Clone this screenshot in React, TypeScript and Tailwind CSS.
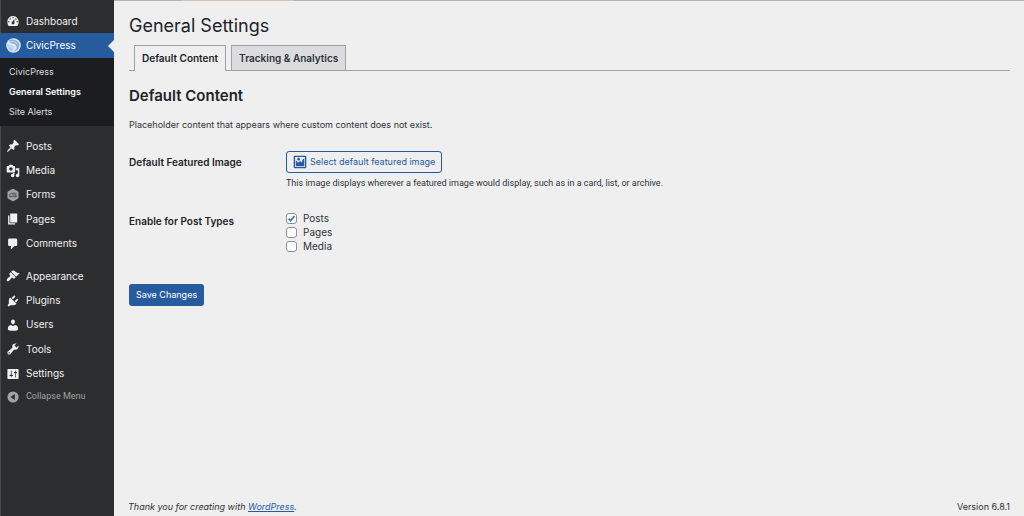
import type { ReactNode } from "react";

type IconProps = { d: string; className?: string };

function Glyph({ d, className = "size-[14px]" }: IconProps) {
  return (
    <svg viewBox="0 0 20 20" fill="currentColor" fillRule="evenodd" aria-hidden="true" className={className}>
      <path d={d} />
    </svg>
  );
}

const paths = {
  dashboard:
    "M3.76 17h12.48A7.95 7.95 0 0 0 18 11c0-4.42-3.58-8-8-8s-8 3.58-8 8c0 2.3.66 4.6 1.76 6zM10 4c.55 0 1 .45 1 1s-.45 1-1 1-1-.45-1-1 .45-1 1-1zM6 6c.55 0 1 .45 1 1s-.45 1-1 1-1-.45-1-1 .45-1 1-1zm8 0c.55 0 1 .45 1 1s-.45 1-1 1-1-.45-1-1 .45-1 1-1zm-5.37 5.55L12 7v6c0 1.1-.9 2-2 2s-2-.9-2-2c0-.57.24-1.08.63-1.45zM4 10c.55 0 1 .45 1 1s-.45 1-1 1-1-.45-1-1 .45-1 1-1zm12 0c.55 0 1 .45 1 1s-.45 1-1 1-1-.45-1-1 .45-1 1-1z",
  posts:
    "M10.44 3.02l1.82-1.82 6.36 6.35-1.83 1.82c-1.05-.68-2.48-.57-3.41.36l-.75.75c-.92.93-1.04 2.35-.35 3.41l-1.83 1.82-2.41-2.41-2.8 2.79c-.42.42-3.38 2.71-3.8 2.29s1.86-3.39 2.28-3.81l2.79-2.79L4.1 9.36l1.83-1.82c1.05.69 2.48.57 3.4-.36l.75-.75c.93-.92 1.05-2.35.36-3.41z",
  media:
    "M13 11V4c0-.55-.45-1-1-1h-1.67L9 1H5L3.67 3H2c-.55 0-1 .45-1 1v7c0 .55.45 1 1 1h10c.55 0 1-.45 1-1zM7 4.5c1.38 0 2.5 1.12 2.5 2.5S8.38 9.5 7 9.5 4.5 8.38 4.5 7 5.62 4.5 7 4.5zM14 6h5v10.5c0 1.38-1.12 2.5-2.5 2.5S14 17.88 14 16.5s1.12-2.5 2.5-2.5c.17 0 .34.02.5.05V9h-3V6zm-4 8.05V13h2v3.5c0 1.38-1.12 2.5-2.5 2.5S7 17.88 7 16.5 8.12 14 9.5 14c.17 0 .34.02.5.05z",
  pages: "M6 15V2h10v13H6zm-1 1h8v2H3V5h2v11z",
  comments: "M5 2h9c1.1 0 2 .9 2 2v7c0 1.1-.9 2-2 2h-2l-5 5v-5H5c-1.1 0-2-.9-2-2V4c0-1.1.9-2 2-2z",
  appearance:
    "M14.48 11.06L7.41 3.99l1.5-1.5c.5-.56 2.3-.47 3.51.32 1.21.8 1.43 1.28 2.91 2.1 1.18.64 2.45 1.26 4.45.85zm-.71.71L6.7 4.7 4.93 6.47c-.39.39-.39 1.02 0 1.41l1.06 1.06c.39.39.39 1.03 0 1.42-.6.6-1.43 1.11-2.21 1.69-.35.26-.7.53-1.01.84C1.43 14.23.4 16.08 1.4 17.07c.99 1 2.84-.03 4.18-1.36.31-.31.58-.66.85-1.02.57-.78 1.08-1.61 1.69-2.21.39-.39 1.02-.39 1.41 0l1.06 1.06c.39.39 1.02.39 1.41 0z",
  plugins:
    "M13.11 4.36L9.87 7.6 8 5.73l3.24-3.24c.35-.34 1.05-.2 1.56.32.52.51.66 1.21.31 1.55zm-8 1.77l.91-1.12 9.01 9.01-1.19.84c-.71.71-2.63 1.16-3.82 1.16H6.14L4.9 17.26c-.59.59-1.54.59-2.12 0-.59-.58-.59-1.53 0-2.12l1.24-1.24v-3.88c0-1.13.4-3.19 1.09-3.89zm7.26 3.97l3.24-3.24c.34-.35 1.04-.21 1.55.31.52.51.66 1.21.31 1.55l-3.24 3.25z",
  users:
    "M10 9.25c-2.27 0-2.73-3.44-2.73-3.44C7 4.02 7.82 2 9.97 2c2.16 0 2.98 2.02 2.71 3.81 0 0-.41 3.44-2.68 3.44zm0 2.57L12.72 10c2.39 0 4.52 2.33 4.52 4.53v2.49s-3.65 1.13-7.24 1.13c-3.65 0-7.24-1.13-7.24-1.13v-2.49c0-2.25 1.94-4.48 4.47-4.48z",
  tools:
    "M16.68 9.77c-1.34 1.34-3.3 1.67-4.95.99l-5.41 6.52c-.99.99-2.59.99-3.58 0s-.99-2.59 0-3.57l6.52-5.42c-.68-1.65-.35-3.61.99-4.95 1.28-1.28 3.12-1.62 4.72-1.06l-2.89 2.89 2.82 2.82 2.86-2.87c.53 1.58.18 3.39-1.08 4.65zM3.81 16.21c.4.39 1.04.39 1.43 0 .4-.4.4-1.04 0-1.43-.39-.4-1.03-.4-1.43 0-.39.39-.39 1.03 0 1.43z",
  settings:
    "M18 16V4c0-.55-.45-1-1-1H3c-.55 0-1 .45-1 1v12c0 .55.45 1 1 1h14c.55 0 1-.45 1-1zM8 11h1c.55 0 1 .45 1 1s-.45 1-1 1H8v1.5c0 .28-.22.5-.5.5s-.5-.22-.5-.5V13H6c-.55 0-1-.45-1-1s.45-1 1-1h1V5.5c0-.28.22-.5.5-.5s.5.22.5.5V11zm5-2h-1c-.55 0-1-.45-1-1s.45-1 1-1h1V5.5c0-.28.22-.5.5-.5s.5.22.5.5V7h1c.55 0 1 .45 1 1s-.45 1-1 1h-1v5.5c0 .28-.22.5-.5.5s-.5-.22-.5-.5V9z",
  collapse: "M10 2a8 8 0 1 0 0 16 8 8 0 0 0 0-16zM12.6 5.8v8.4L6.4 10z",
  image:
    "M2.25 1h15.5c.69 0 1.25.56 1.25 1.25v15.5c0 .69-.56 1.25-1.25 1.25H2.25C1.56 19 1 18.44 1 17.75V2.25C1 1.56 1.56 1 2.25 1zM17 17V3H3v14h14zM10 6c0-1.1-.9-2-2-2s-2 .9-2 2 .9 2 2 2 2-.9 2-2zm3 5s0-6 3-6v10c0 .55-.45 1-1 1H5c-.55 0-1-.45-1-1V8c2 0 3 4 3 4s1-3 3-3 3 2 3 2z",
};

function CivicPressLogo() {
  return (
    <svg viewBox="0 0 30 30" aria-hidden="true" className="size-[15px]">
      <circle cx="15" cy="15" r="14.5" fill="#dfeaf6" />
      <path d="M5 5C10 2 17 2 22 6c5 4 6 10 3 15-2 4-6 6-10 6 4-3 7-6 6-10-1-4-4-5-8-6-4 0-7-2-8-6z" fill="#8fb2da" />
      <path d="M3 12c3 2 6 2 9 3 4 1 5 5 3 8-1 2-3 3-5 4-5-3-8-8-7-15z" fill="#b4cce8" />
      <path d="M6 8c5-2 11-2 16 3M5 16c4 1 8 1 9 5" fill="none" stroke="#eef4fb" strokeWidth="1.2" />
    </svg>
  );
}

function FormsIcon() {
  return (
    <svg viewBox="0 0 20 20" aria-hidden="true" className="size-[14px] text-[#a0a3a6]">
      <path
        fill="currentColor"
        d="M8.8 1.3a2.4 2.4 0 0 1 2.4 0l5.500 3.200a2.400 2.400 0 0 1 1.200 2v7a2.400 2.400 0 0 1-1.200 2l-5.500 3.200a2.400 2.400 0 0 1-2.400 0l-5.500-3.200a2.400 2.400 0 0 1-1.200-2v-7a2.400 2.400 0 0 1 1.200-2z"
      />
      <path d="M15 7.500H8.200C6.200 7.500 5.300 9 5.200 12.500h9.300V10H8.500" fill="none" stroke="#46484b" strokeWidth="1.300" />
    </svg>
  );
}

function MenuItem({ icon, children }: { icon: ReactNode; children: ReactNode }) {
  return (
    <li className="flex">
      <a href="#" className="flex flex-1 items-center text-[10px] text-[#f0f0f1]">
        <span className="flex w-[26px] justify-center">{icon}</span>
        {children}
      </a>
    </li>
  );
}

function Sidebar() {
  return (
    <nav aria-label="Main menu" className="w-[114px] shrink-0 border-l border-[#48494b] bg-[#2c2d2f] pt-[9px]">
      <div className="-ml-px">
        <ul className="grid h-[24px] auto-rows-fr">
          <MenuItem icon={<Glyph d={paths.dashboard} />}>Dashboard</MenuItem>
        </ul>
        <a href="#" className="relative flex h-[25px] items-center bg-[#265c9e] text-[10px] text-white">
          <span className="flex w-[26px] justify-center">
            <CivicPressLogo />
          </span>
          CivicPress
          <span className="absolute top-1/2 right-0 -translate-y-1/2 border-y-6 border-r-6 border-y-transparent border-r-[#efefef]" />
        </a>
        <ul className="flex flex-col bg-[#1c1d20] px-[9px] py-[4px] text-[9px] leading-[20px] text-[#dcdcde]">
          <li><a href="#">CivicPress</a></li>
          <li><a href="#" className="font-semibold text-white">General Settings</a></li>
          <li><a href="#">Site Alerts</a></li>
        </ul>
        <ul className="mt-[8px] grid h-[122px] auto-rows-fr">
          <MenuItem icon={<Glyph d={paths.posts} />}>Posts</MenuItem>
          <MenuItem icon={<Glyph d={paths.media} />}>Media</MenuItem>
          <MenuItem icon={<FormsIcon />}>Forms</MenuItem>
          <MenuItem icon={<Glyph d={paths.pages} />}>Pages</MenuItem>
          <MenuItem icon={<Glyph d={paths.comments} />}>Comments</MenuItem>
        </ul>
        <ul className="mt-[8px] grid h-[122px] auto-rows-fr">
          <MenuItem icon={<Glyph d={paths.appearance} />}>Appearance</MenuItem>
          <MenuItem icon={<Glyph d={paths.plugins} />}>Plugins</MenuItem>
          <MenuItem icon={<Glyph d={paths.users} />}>Users</MenuItem>
          <MenuItem icon={<Glyph d={paths.tools} />}>Tools</MenuItem>
          <MenuItem icon={<Glyph d={paths.settings} />}>Settings</MenuItem>
        </ul>
        <button type="button" className="flex h-[22px] w-full items-center font-['Roboto','Inter',sans-serif] text-[9px] text-[#a0a3a6]">
          <span className="flex w-[26px] justify-center">
            <Glyph d={paths.collapse} />
          </span>
          Collapse Menu
        </button>
      </div>
    </nav>
  );
}

function PostTypeOption({ label, checked = false }: { label: string; checked?: boolean }) {
  return (
    <label className="flex items-center gap-[6px] text-[10px] leading-[14px]">
      <span className="relative flex">
        <input
          type="checkbox"
          defaultChecked={checked}
          className="peer size-[11px] appearance-none rounded-[3px] border border-[#8c8f94] bg-white"
        />
        <svg
          viewBox="0 0 11 11"
          aria-hidden="true"
          className="pointer-events-none invisible absolute inset-0 size-[11px] peer-checked:visible"
        >
          <path d="M2.600 5.600 4.700 7.800 8.500 2.900" fill="none" stroke="#3a76c0" strokeWidth="1.700" />
        </svg>
      </span>
      {label}
    </label>
  );
}

export default function App() {
  return (
    <div className="flex min-h-screen flex-col bg-[#efefef] font-['Inter','Liberation_Sans',sans-serif] text-[#2c3338]">
      <div className="flex min-h-screen">
        <Sidebar />
        <div className="flex flex-1 flex-col">
          <div className="flex h-px bg-[#b4b4b5]">
            <div className="ml-[67px] w-[113px] bg-[#d3c2b0]" />
          </div>
          <main className="flex-1 pr-[14px] pl-[15px]">
            <h1 className="pt-[13px] text-[18px] leading-[24px] text-[#1d2327]">General Settings</h1>
            <div className="mt-[7px] flex gap-[5px] border-b border-[#a0a1a4] pl-[5px]">
              <a
                href="#"
                className="-mb-px border border-b-0 border-[#a0a1a4] bg-[#efefef] px-[7px] text-[10px] leading-[25px] font-semibold text-[#1d2327]"
              >
                Default Content
              </a>
              <a
                href="#"
                className="border border-b-0 border-[#a0a1a4] bg-[#dcdcde] px-[7px] text-[10px] leading-[24px] font-semibold text-[#2c3338]"
              >
                Tracking &amp; Analytics
              </a>
            </div>
            <h2 className="mt-[16px] text-[15px] leading-[18px] font-semibold text-[#1d2327]">Default Content</h2>
            <p className="mt-[13px] text-[9px] leading-[14px]">
              Placeholder content that appears where custom content does not exist.
            </p>
            <form>
              <div className="mt-[19px] flex">
                <label htmlFor="featured" className="w-[157px] text-[10px] leading-[22px] font-semibold text-[#1d2327]">
                  Default Featured Image
                </label>
                <div>
                  <button
                    id="featured"
                    type="button"
                    className="flex h-[22px] items-center gap-[3px] rounded-[3px] border border-[#265c9e] px-[6px] text-[9px] text-[#265c9e]"
                  >
                    <Glyph d={paths.image} />
                    Select default featured image
                  </button>
                  <p className="mt-[3px] font-['Roboto','Inter',sans-serif] text-[9px] leading-[14px]">
                    This image displays wherever a featured image would display, such as in a card, list, or archive.
                  </p>
                </div>
              </div>
              <fieldset className="mt-[21px] flex">
                <legend className="float-left w-[157px] text-[10px] leading-[20px] font-semibold text-[#1d2327]">
                  Enable for Post Types
                </legend>
                <div className="flex flex-col">
                  <PostTypeOption label="Posts" checked />
                  <PostTypeOption label="Pages" />
                  <PostTypeOption label="Media" />
                </div>
              </fieldset>
              <button
                type="submit"
                className="mt-[31px] h-[22px] rounded-[3px] bg-[#265c9e] px-[7px] text-[9px] text-white"
              >
                Save Changes
              </button>
            </form>
          </main>
          <footer className="flex items-center justify-between pr-[14px] pb-[2px] pl-[14px] text-[9px] leading-[14px]">
            <p className="italic">
              Thank you for creating with{" "}
              <a href="#" className="text-[#265c9e] underline">
                WordPress
              </a>
              .
            </p>
            <p>Version 6.8.1</p>
          </footer>
        </div>
      </div>
    </div>
  );
}
